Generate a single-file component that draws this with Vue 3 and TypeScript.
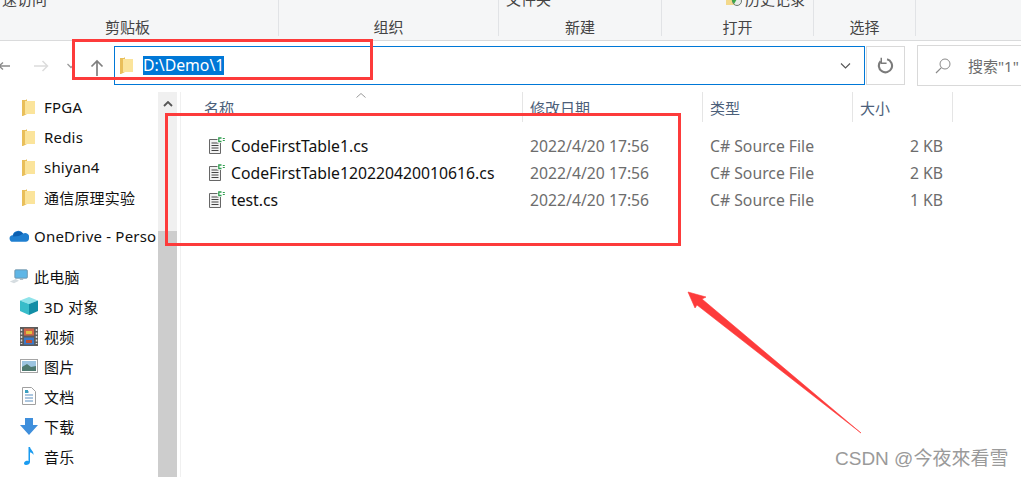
<script setup lang="ts">
const favourites = ['FPGA', 'Redis', 'shiyan4', '通信原理实验']
const columns = [
  { label: '名称', width: 342 },
  { label: '修改日期', width: 180 },
  { label: '类型', width: 150 },
  { label: '大小', width: 100 },
]
const files = [
  { name: 'CodeFirstTable1.cs', size: '2 KB' },
  { name: 'CodeFirstTable120220420010616.cs', size: '2 KB' },
  { name: 'test.cs', size: '1 KB' },
]
const groups = [
  { label: '剪贴板', top: '速访问', cls: 'g1' },
  { label: '组织', top: '', cls: 'g2' },
  { label: '新建', top: '文件夹', cls: 'g3' },
  { label: '打开', top: '历史记录', cls: 'g4' },
  { label: '选择', top: '', cls: 'g5' },
]
</script>

<template>
  <div class="window">
    <div class="ribbon">
      <div v-for="g in groups" :key="g.label" class="group" :class="g.cls">
        <div class="cut">
          <svg v-if="g.cls === 'g4'" class="histicon" width="16" height="8" viewBox="0 0 16 8">
            <rect x="0" y="0" width="9" height="5" fill="#f3d98c" />
            <circle cx="11" cy="1" r="4.5" fill="#e8ece8" stroke="#6e7a72" />
            <path d="M5 -1l3 5 3-5z" fill="#3fa648" />
          </svg>
          <span>{{ g.top }}</span>
        </div>
        <div class="glabel">{{ g.label }}</div>
      </div>
    </div>

    <div class="navbar">
      <svg class="nav-ico back" width="12" height="14" viewBox="0 0 12 14"><path d="M0 7h10M3 3.5L-1 7l4 3.5" fill="none" stroke="#8a8a8a" stroke-width="1.4" /></svg>
      <svg class="nav-ico fwd" width="16" height="14" viewBox="0 0 16 14"><path d="M1 7h13M9.500 2l5 5-5 5" fill="none" stroke="#dcdcdc" stroke-width="1.5" /></svg>
      <svg class="nav-ico down" width="8" height="6" viewBox="0 0 8 6"><path d="M.5 1l3.500 3.500L7.500 1" fill="none" stroke="#9a9a9a" stroke-width="1.3" /></svg>
      <svg class="nav-ico up" width="14" height="17" viewBox="0 0 14 17"><path d="M7 17V2M1.500 7.500L7 2l5.500 5.500" fill="none" stroke="#7f7f7f" stroke-width="1.7" /></svg>
      <div class="address">
        <svg class="folder" width="13" height="17" viewBox="0 0 13 17">
          <path d="M0 1h4l1-1v15l-4 2H0z" fill="#e9bf5a" />
          <path d="M3 2h10v13H3z" fill="#fbe49b" />
        </svg>
        <span class="selected">D:\Demo\1</span>
        <svg class="chev" width="11" height="6" viewBox="0 0 11 6"><path d="M1 .5l4.500 4.500L10 .5" fill="none" stroke="#555" stroke-width="1.1" /></svg>
      </div>
      <div class="refresh">
        <svg width="17" height="17" viewBox="0 0 16 16"><path d="M9.500 2.200A6.200 6.200 0 1 1 3.400 4" fill="none" stroke="#7b7b7b" stroke-width="2" /><path d="M4 0.600v5.200h5" fill="none" stroke="#7b7b7b" stroke-width="1.4" /></svg>
      </div>
      <div class="search">
        <svg width="16" height="16" viewBox="0 0 16 16"><circle cx="10" cy="6" r="5" fill="none" stroke="#8a8a8a" stroke-width="1" /><path d="M6.400 9.600L1 15" stroke="#8a8a8a" stroke-width="1.2" /></svg>
        <span>搜索"1"</span>
      </div>
    </div>

    <div class="body">
      <aside class="sidebar">
        <div v-for="f in favourites" :key="f" class="nav l1">
          <svg class="ic" width="13" height="17" viewBox="0 0 13 17">
            <path d="M0 1h4l1-1v15l-4 2H0z" fill="#e9bf5a" />
            <path d="M3 2h10v13H3z" fill="#fbe49b" />
          </svg>
          <span>{{ f }}</span>
        </div>
        <div class="nav l0 drive">
          <svg width="20" height="14" viewBox="0 0 24 16">
            <path d="M5 15a4 4 0 0 1-.6-8A7 7 0 0 1 17 5a5 5 0 0 1 7 6c0 2-1.500 4-4 4z" fill="#1f7fd0" />
            <path d="M5 7.500A7 7 0 0 1 17 5l-5 3-7 .5z" fill="#0c5fb0" />
          </svg>
          <span>OneDrive - Perso</span>
        </div>
        <div class="nav l0 pc">
          <svg width="20" height="17" viewBox="0 0 24 18">
            <rect x="7" y="1" width="15" height="10" rx="1" fill="#5fb6e6" stroke="#6c8ea3" />
            <path d="M13 11h4v2h-4z" fill="#9eb4c0" />
            <path d="M1 15l7-3 4 2-6 3z" fill="#d6dde1" />
          </svg>
          <span>此电脑</span>
        </div>
        <div class="nav l1">
          <svg class="ic wide" width="18" height="18" viewBox="0 0 18 18">
            <path d="M9 0l9 3.500L9 7 0 3.500z" fill="#8fe3ea" />
            <path d="M0 3.500L9 7v11l-9-4z" fill="#38bcc9" />
            <path d="M18 3.500L9 7v11l9-4z" fill="#118ea6" />
          </svg>
          <span>3D 对象</span>
        </div>
        <div class="nav l1">
          <svg class="ic wide" width="18" height="19" viewBox="0 0 18 19">
            <rect width="18" height="19" fill="#5c5c5c" />
            <rect x="4" y="1.500" width="10" height="7" fill="#d0664a" />
            <rect x="4" y="10.500" width="10" height="7" fill="#3b78c8" />
            <path d="M6 4h6v3H6z" fill="#e0c040" />
            <path d="M6 13h6v3H6z" fill="#c05030" />
            <path d="M1.500 2v15M16.500 2v15" stroke="#ddd" stroke-width="1.500" stroke-dasharray="2 1.500" />
          </svg>
          <span>视频</span>
        </div>
        <div class="nav l1">
          <svg class="ic wide" width="18" height="14" viewBox="0 0 18 14">
            <rect x=".5" y=".5" width="17" height="13" fill="#fff" stroke="#a5a5a5" />
            <rect x="2" y="2" width="14" height="6" fill="#9cc4e0" />
            <path d="M2 8l5-3 4 3 5-1v5H2z" fill="#4e7a70" />
          </svg>
          <span>图片</span>
        </div>
        <div class="nav l1">
          <svg class="ic wide" width="18" height="18" viewBox="0 0 18 18">
            <path d="M2.500.5h9l4 4v13h-13z" fill="#fff" stroke="#a0a0a0" />
            <path d="M5 5h4M5 8h8M5 11h8M5 14h8" stroke="#5a8fc0" />
            <rect x="5" y="3" width="3" height="3" fill="#3aa0c0" />
          </svg>
          <span>文档</span>
        </div>
        <div class="nav l1">
          <svg class="ic wide" width="18" height="17" viewBox="0 0 18 17">
            <path d="M5 0h8v7h5l-9 10L0 7h5z" fill="#3f8fdc" />
          </svg>
          <span>下载</span>
        </div>
        <div class="nav l1">
          <svg class="ic wide" width="18" height="18" viewBox="0 0 18 18">
            <path d="M8.500 0h1.500c.5 3 4 4 3.500 8-1-2-2.500-2.500-3.500-2.500V15c0 2-2 3-4 3s-2.500-2-1.500-3 3-1.500 4-.8z" fill="#1a9bf0" />
          </svg>
          <span>音乐</span>
        </div>
      </aside>

      <div class="scrollbar">
        <div class="track">
          <svg width="10" height="6" viewBox="0 0 10 6"><path d="M1 5l4-4 4 4" fill="none" stroke="#555" stroke-width="1.800" /></svg>
        </div>
        <div class="thumb"></div>
      </div>

      <main class="list">
        <div class="sort">
          <svg width="10" height="5" viewBox="0 0 10 5"><path d="M.5 4.500L5 .5l4.500 4" fill="none" stroke="#9a9a9a" /></svg>
        </div>
        <div class="head">
          <div v-for="c in columns" :key="c.label" class="col" :style="{ width: c.width + 'px' }">{{ c.label }}</div>
        </div>
        <div class="rows">
          <div v-for="f in files" :key="f.name" class="row">
            <svg class="fico" width="16" height="17" viewBox="0 0 16 17">
              <path d="M.5 2.500h11v14H.5z" fill="#f2f2f2" stroke="#666" />
              <path d="M2.500 6h7M2.500 8.500h7M2.500 11h7M2.500 13.500h7" stroke="#444" />
              <rect x="8.500" y="0" width="7.500" height="6" fill="#fff" />
              <path d="M12.500 1H9.800v3.500h2.700" fill="none" stroke="#2f9e4f" stroke-width="1.300" />
              <path d="M13.800 1.500h2M13.800 3.500h2" stroke="#2f9e4f" stroke-width="1.200" />
            </svg>
            <span class="fname">{{ f.name }}</span>
            <span class="fdate">2022/4/20 17:56</span>
            <span class="ftype">C# Source File</span>
            <span class="fsize">{{ f.size }}</span>
          </div>
        </div>
      </main>
    </div>

    <div class="mark mark-a"></div>
    <div class="mark mark-b"></div>
    <svg class="arrow" width="180" height="150" viewBox="0 0 180 150">
      <path d="M2 4L20 9 16 11 175 145 11 17 9 20z" fill="#fd3b3b" stroke="#fd3b3b" stroke-width=".6" />
    </svg>
    <div class="watermark">CSDN @今夜來看雪</div>
  </div>
</template>

<style scoped>
.window {
  position: relative;
  width: 1021px;
  height: 477px;
  overflow: hidden;
  background: #fff;
  font-family: "Noto Sans", "Noto Sans CJK SC", sans-serif;
  font-size: 15px;
  color: #1a1a1a;
}
.ribbon {
  display: flex;
  height: 40px;
  background: #f5f6f7;
  border-bottom: 1px solid #dadbdc;
  box-sizing: content-box;
}
.group {
  height: 36px;
  border-right: 1px solid #e1e3e6;
  box-sizing: border-box;
  text-align: center;
  font-size: 15px;
  color: #444;
  position: relative;
}
.g1 { width: 279px; padding-right: 23px; }
.g2 { width: 220px; }
.g3 { width: 163px; }
.g4 { width: 152px; }
.g5 { width: 102px; }
.cut {
  height: 10px;
  overflow: hidden;
  position: relative;
  white-space: nowrap;
  line-height: 0;
}
.cut span { position: relative; top: -1px; }
.g1 .cut { text-align: left; padding-left: 2px; }
.g3 .cut { text-align: left; padding-left: 7px; }
.g4 .cut { text-align: left; padding-left: 64px; }
.g4 .cut span { margin-left: 3px; }
.histicon { vertical-align: top; }
.glabel { line-height: 20px; margin-top: 7px; }

.navbar {
  display: flex;
  align-items: center;
  height: 39px;
  margin-top: 5px;
}
.nav-ico { flex: none; }
.back { margin-right: 21px; }
.fwd { margin-right: 18px; }
.down { margin-right: 15px; }
.up { margin-right: 10px; margin-top: 3px; }
.address {
  display: flex;
  align-items: center;
  width: 751px;
  height: 39px;
  box-sizing: border-box;
  border: 1px solid #0078d7;
  padding-left: 5px;
  margin-right: 1px;
}
.folder { margin-right: 10px; }
.selected {
  background: #0078d7;
  color: #fff;
  line-height: 19px;
  font-size: 15.800px;
}
.chev { margin-left: auto; margin-right: 13px; }
.refresh {
  display: flex;
  align-items: center;
  justify-content: center;
  width: 39px;
  height: 39px;
  box-sizing: border-box;
  border: 1px solid #d9d9d9;
  margin-right: 12px;
}
.search {
  display: flex;
  align-items: center;
  flex: 1;
  height: 39px;
  border: 1px solid #d9d9d9;
  border-right: 0;
  padding-left: 17px;
  gap: 17px;
  color: #6d6d6d;
  white-space: nowrap;
}

.body {
  display: flex;
  margin-top: 7px;
  height: 385px;
}
.sidebar {
  width: 158px;
  flex: none;
  overflow: hidden;
  font-size: 15px;
  letter-spacing: .2px;
  color: #111;
}
.nav {
  display: flex;
  align-items: center;
  height: 30px;
  white-space: nowrap;
}
.l1 { padding-left: 22px; }
.l0 { padding-left: 9px; }
.ic { width: 13px; margin-right: 9px; flex: none; }
.ic.wide { width: 18px; margin-left: -2px; margin-right: 6px; }
.drive { margin-top: 9px; }
.drive svg { margin-right: 5px; flex: none; }
.pc { margin-top: 10px; }
.pc svg { margin-right: 5px; flex: none; }
.scrollbar {
  width: 19px;
  flex: none;
  display: flex;
  flex-direction: column;
  background: #f0f0f0;
}
.track {
  height: 139px;
  padding-top: 9px;
  box-sizing: border-box;
  text-align: center;
  line-height: 0;
  flex: none;
}
.thumb { flex: 1; background: #cdcdcd; }
.list {
  flex: 1;
  position: relative;
  border-left: 1px solid #f0f0f0;
  margin-left: 3px;
}
.sort {
  position: absolute;
  left: 175px;
  top: 0;
  line-height: 0;
}
.head {
  display: flex;
  height: 30px;
}
.col {
  box-sizing: border-box;
  padding-left: 23px;
  border-right: 1px solid #e5e5e5;
  line-height: 33px;
  color: #4c607a;
  height: 30px;
  font-size: 15px;
  flex: none;
}
.col:nth-child(n+2) { padding-left: 7px; }
.rows { padding-top: 10px; }
.row {
  display: flex;
  align-items: center;
  height: 27px;
  white-space: nowrap;
  font-size: 15.750px;
}
.fico { margin-left: 28px; margin-right: 6px; flex: none; }
.fname { width: 299px; flex: none; color: #111; }
.fdate { width: 180px; flex: none; color: #6d6d6d; }
.ftype { width: 150px; flex: none; color: #6d6d6d; }
.fsize { width: 83px; flex: none; text-align: right; color: #6d6d6d; }

.mark {
  position: absolute;
  border: 3px solid #fd3b3b;
  box-sizing: border-box;
}
.mark-a { left: 72px; top: 39px; width: 301px; height: 41px; }
.mark-b { left: 165px; top: 113px; width: 516px; height: 133px; }
.arrow { position: absolute; left: 686px; top: 288px; }
.watermark {
  position: absolute;
  left: 835px;
  top: 448px;
  font-family: "Liberation Sans", "Noto Sans CJK SC", sans-serif;
  font-size: 19px;
  line-height: 22px;
  color: #9a9a9a;
  white-space: nowrap;
}
</style>
